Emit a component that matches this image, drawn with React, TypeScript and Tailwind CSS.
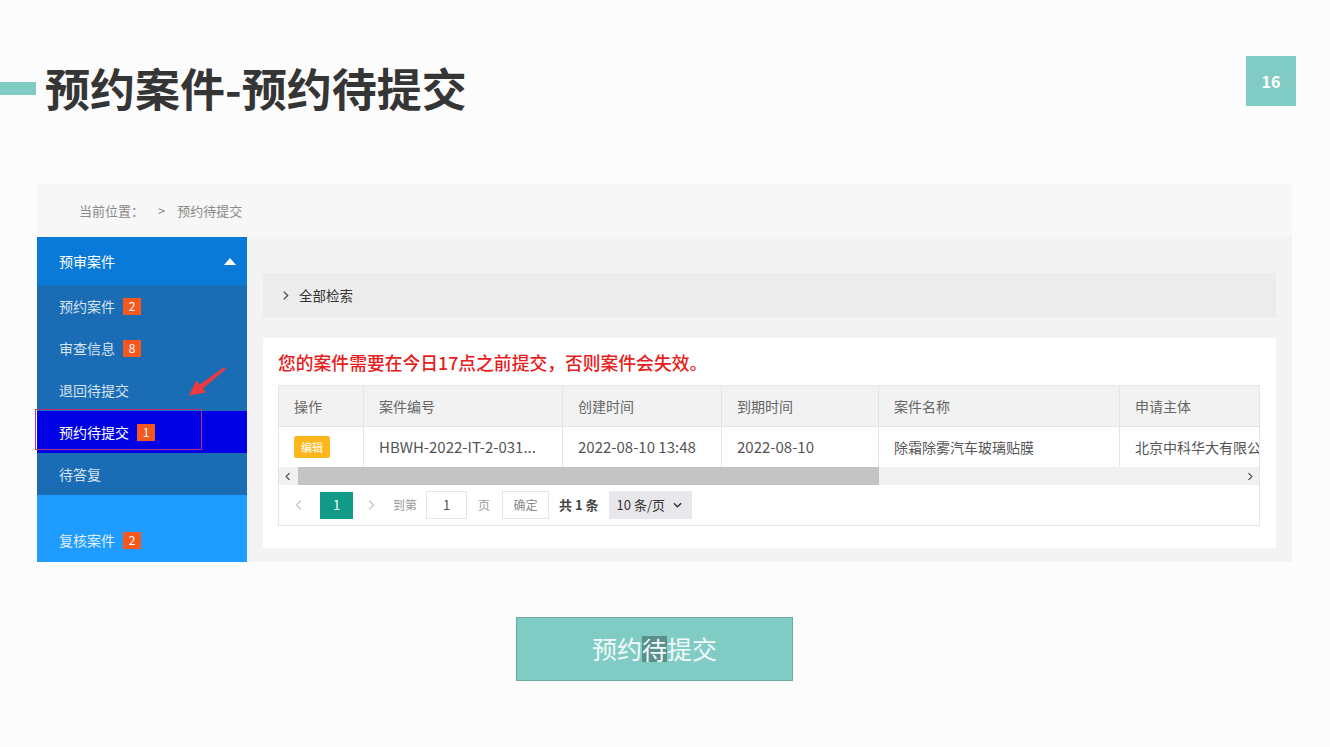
import type { ReactNode } from "react";

const navItems: { label: string; badge?: string; active?: boolean }[] = [
  { label: "预约案件", badge: "2" },
  { label: "审查信息", badge: "8" },
  { label: "退回待提交" },
  { label: "预约待提交", badge: "1", active: true },
  { label: "待答复" },
];

const columns = [
  { title: "操作", w: "w-[85px]" },
  { title: "案件编号", w: "w-[199px]" },
  { title: "创建时间", w: "w-[159px]" },
  { title: "到期时间", w: "w-[157px]" },
  { title: "案件名称", w: "w-[241px]" },
  { title: "申请主体", w: "w-[200px]" },
];

function Badge({ n }: { n: string }) {
  return (
    <span className="ml-[8px] inline-flex h-[17px] w-[18px] items-center justify-center bg-[#f4581f] text-[12px] leading-none text-white">
      {n}
    </span>
  );
}

function Chevron({ dir, className }: { dir: "left" | "right"; className?: string }) {
  return (
    <svg viewBox="0 0 8 12" className={className} fill="none" stroke="currentColor" strokeWidth="1.4">
      {dir === "right" ? <path d="M2 1.5 6.5 6 2 10.5" /> : <path d="M6 1.5 1.5 6 6 10.5" />}
    </svg>
  );
}

function Cell({ w, children, className = "" }: { w: string; children: ReactNode; className?: string }) {
  return (
    <div className={`${w} flex shrink-0 items-center overflow-hidden whitespace-nowrap border-r border-[#e4e4e4] pl-[15px] ${className}`}>
      {children}
    </div>
  );
}

function Sidebar() {
  return (
    <div className="relative flex w-[210px] shrink-0 flex-col">
      <div className="flex h-[48px] items-center justify-between bg-[#0a7ad8] pl-[22px] pr-[11px] text-[14px] text-white">
        <span>预审案件</span>
        <svg viewBox="0 0 12 7" className="h-[7px] w-[12px]" fill="#fff">
          <path d="M6 0 12 7H0z" />
        </svg>
      </div>
      <div className="bg-[#1a6db4]">
        {navItems.map((item) => (
          <div
            key={item.label}
            className={`flex h-[42px] items-center pl-[22px] text-[14px] ${
              item.active ? "bg-[#0000e4] text-white" : "text-[#d6e3f0]"
            }`}
          >
            <span>{item.label}</span>
            {item.badge && <Badge n={item.badge} />}
          </div>
        ))}
      </div>
      <div className="flex-1 bg-[#1e9cff] pt-[24px]">
        <div className="flex h-[42px] items-center pl-[22px] text-[14px] text-[#e2efff]">
          <span>复核案件</span>
          <Badge n="2" />
        </div>
      </div>

      {/* annotation: outline + arrow */}
      <div className="absolute left-[-2px] top-[172px] h-[41px] w-[167px] border-[1.5px] border-[#b8337a]" />
      <svg viewBox="0 0 45 35" className="absolute left-[148px] top-[128px] h-[35px] w-[45px]" fill="#ec3a3f">
        <path d="M11.2 15.4 4 30.5 21 27.4 18 23.4 41 4 39.2 2 15 19.6z" />
      </svg>
    </div>
  );
}

function Table() {
  return (
    <div className="mt-[11px] w-[982px] overflow-hidden border border-[#e6e6e6]">
      <div className="flex h-[41px] border-b border-[#e4e4e4] bg-[#f2f2f2] text-[14px] text-[#666]">
        {columns.map((c) => (
          <Cell key={c.title} w={c.w}>
            {c.title}
          </Cell>
        ))}
      </div>
      <div className="flex h-[40px] bg-white text-[15px] text-[#555]">
        <Cell w="w-[85px]">
          <span className="flex h-[22px] w-[36px] items-center justify-center rounded-[2px] bg-[#fbb71d] text-[11px] text-white">
            编辑
          </span>
        </Cell>
        <Cell w="w-[199px]">HBWH-2022-IT-2-031...</Cell>
        <Cell w="w-[159px]">2022-08-10 13:48</Cell>
        <Cell w="w-[157px]">2022-08-10</Cell>
        <Cell w="w-[241px]" className="text-[14px]">
          除霜除雾汽车玻璃贴膜
        </Cell>
        <Cell w="w-[200px]" className="text-[14px]">
          北京中科华大有限公司
        </Cell>
      </div>
      <div className="relative flex h-[18px] items-center justify-between bg-[#f1f1f1] px-[6px] text-[#333]">
        <div className="absolute left-[19px] top-0 h-[18px] w-[581px] bg-[#c3c3c3]" />
        <Chevron dir="left" className="relative h-[9px] w-[6px]" />
        <Chevron dir="right" className="relative h-[9px] w-[6px]" />
      </div>
      <div className="flex h-[40px] items-center bg-white text-[12px] text-[#999]">
        <Chevron dir="left" className="ml-[16px] h-[12px] w-[8px] text-[#c8c8c8]" />
        <span className="ml-[17px] flex h-[27px] w-[33px] items-center justify-center bg-[#119a88] text-[13px] text-white">1</span>
        <Chevron dir="right" className="ml-[14px] h-[12px] w-[8px] text-[#c8c8c8]" />
        <span className="ml-[18px]">到第</span>
        <span className="ml-[9px] flex h-[28px] w-[41px] items-center justify-center border border-[#e6e6e6] text-[13px] text-[#555]">1</span>
        <span className="ml-[11px]">页</span>
        <span className="ml-[12px] flex h-[28px] w-[47px] items-center justify-center border border-[#e6e6e6] text-[#888]">确定</span>
        <span className="ml-[10px] text-[13px] font-bold text-[#444]">共 1 条</span>
        <span className="ml-[10px] flex h-[28px] w-[83px] items-center gap-[8px] bg-[#e8e8ec] pl-[8px] text-[13px] text-[#333]">
          10 条/页
          <svg viewBox="0 0 10 6" className="h-[6px] w-[9px]" fill="none" stroke="#333" strokeWidth="1.6">
            <path d="M1 1 5 5 9 1" />
          </svg>
        </span>
      </div>
    </div>
  );
}

export default function App() {
  return (
    <div className="flex h-[747px] w-[1330px] flex-col overflow-hidden bg-[#fcfcfc] font-['Noto_Sans_CJK_SC','Noto_Sans',sans-serif]">
      <div className="flex items-start justify-between pr-[34px] pt-[56px]">
        <div className="mt-[9px] flex items-center">
          <div className="h-[13px] w-[36px] bg-[#80cbc4]" />
          <h1 className="ml-[9px] text-[45px] font-bold leading-[46px] text-[#353535]">预约案件-预约待提交</h1>
        </div>
        <div className="flex h-[50px] w-[50px] items-center justify-center bg-[#80cbc4] text-[16px] font-bold text-white">16</div>
      </div>

      <div className="ml-[37px] mt-[73px] flex w-[1255px] flex-col">
        <div className="flex h-[53px] items-center bg-[#f7f7f7] pl-[42px] text-[13px] text-[#8a8a8a]">
          <span>当前位置：</span>
          <span className="ml-[14px]">&gt;</span>
          <span className="ml-[12px]">预约待提交</span>
        </div>
        <div className="flex h-[325px]">
          <Sidebar />
          <div className="flex-1 bg-[#f3f3f3] px-[16px] pt-[36px]">
            <div className="flex h-[45px] items-center bg-[#ececec] pl-[19px] text-[#444]">
              <Chevron dir="right" className="h-[11px] w-[7px]" />
              <span className="ml-[10px] text-[13.5px] text-[#333]">全部检索</span>
            </div>
            <div className="mt-[20px] h-[210px] bg-white pl-[15px] pt-[12px]">
              <p className="text-[17.8px] font-medium leading-[24px] text-[#e81c1c]">您的案件需要在今日17点之前提交，否则案件会失效。</p>
              <Table />
            </div>
          </div>
        </div>
      </div>

      <div className="ml-[516px] mt-[55px] flex h-[64px] w-[277px] items-center justify-center border border-[#6fa9a4] bg-[#80cbc4] text-[25px] text-[#f2faf9]">
        预约<span className="bg-[#5a8f8a] leading-[26px]">待</span>提交
      </div>
    </div>
  );
}
